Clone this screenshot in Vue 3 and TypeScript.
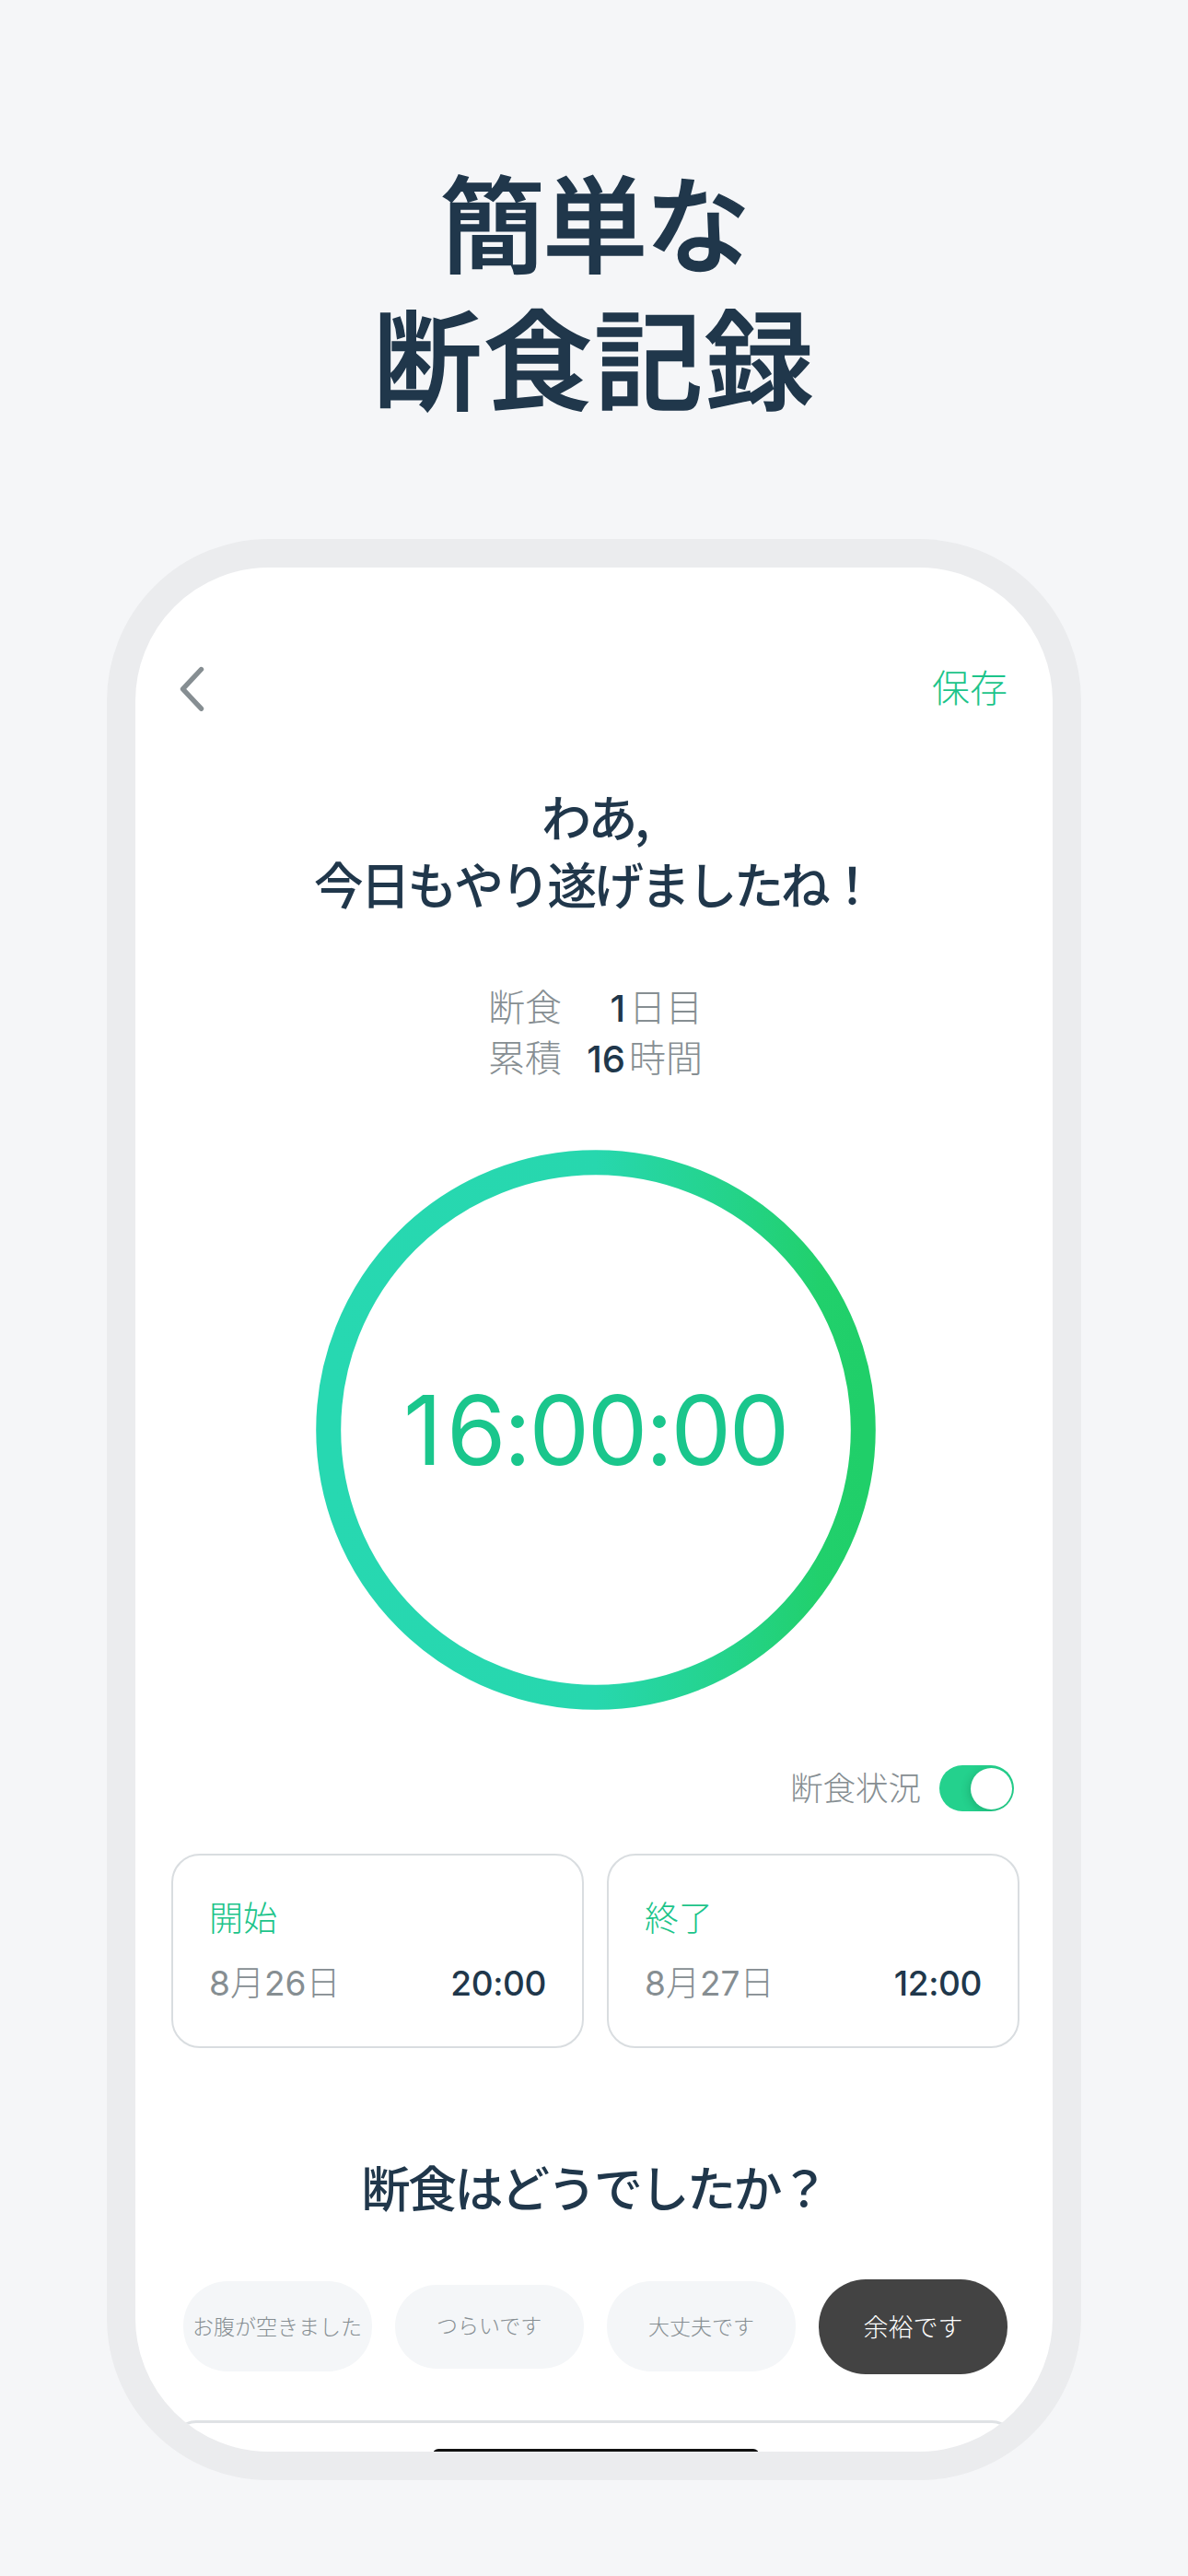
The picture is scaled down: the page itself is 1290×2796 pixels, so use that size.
<script setup lang="ts">
interface Period {
  label: string
  date: string[]
  time: string
}

interface Mood {
  label: string
  size: 'sm' | 'md' | 'lg'
  selected?: boolean
}

const stats = [
  { label: '断食', value: '1', unit: '日目' },
  { label: '累積', value: '16', unit: '時間' },
]

const periods: Period[] = [
  { label: '開始', date: ['8', '月', '26', '日'], time: '20:00' },
  { label: '終了', date: ['8', '月', '27', '日'], time: '12:00' },
]

const moods: Mood[] = [
  { label: 'お腹が空きました', size: 'md' },
  { label: 'つらいです', size: 'sm' },
  { label: '大丈夫です', size: 'md' },
  { label: '余裕です', size: 'lg', selected: true },
]
</script>

<template>
  <main class="poster">
    <h1 class="title">
      <span class="title-first">簡単な</span>
      <span class="title-second">断食記録</span>
    </h1>

    <section class="phone">
      <header class="nav">
        <svg class="back" width="28" height="50" viewBox="0 0 28 50" fill="none">
          <path d="M24.5 3.5 4.5 24.8 24.5 46.2" stroke="#868e92" stroke-width="5.4" stroke-linecap="round" stroke-linejoin="round" />
        </svg>
        <span class="save">保存</span>
      </header>

      <h2 class="headline">
        <span>わあ,</span>
        <span>今日もやり遂げましたね！</span>
      </h2>

      <div class="stats">
        <div v-for="s in stats" :key="s.label" class="stat">
          <span class="stat-label">{{ s.label }}</span>
          <span class="stat-value">{{ s.value }}</span>
          <span class="stat-unit">{{ s.unit }}</span>
        </div>
      </div>

      <div class="ring">
        <svg class="ring-art" width="608" height="608" viewBox="0 0 608 608" fill="none">
          <defs>
            <linearGradient id="ringFill" x1="0" y1="0" x2="1" y2="0">
              <stop offset="0" stop-color="#27d8b1" />
              <stop offset="0.5" stop-color="#27d7ae" />
              <stop offset="0.75" stop-color="#24d38a" />
              <stop offset="0.92" stop-color="#21d06c" />
              <stop offset="1" stop-color="#20cf69" />
            </linearGradient>
          </defs>
          <circle cx="304" cy="304" r="290.3" stroke="url(#ringFill)" stroke-width="27" />
        </svg>
        <span class="timer"><span class="timer-lead">1</span>6:00:00</span>
      </div>

      <div class="status">
        <span class="status-label">断食状況</span>
        <span class="toggle"><i class="knob"></i></span>
      </div>

      <div class="cards">
        <article v-for="p in periods" :key="p.label" class="card">
          <div class="card-label">{{ p.label }}</div>
          <div class="card-row">
            <span class="date"><span v-for="(part, i) in p.date" :key="i" :class="i % 2 ? 'date-unit' : 'date-number'">{{ part }}</span></span>
            <span class="time">{{ p.time }}</span>
          </div>
        </article>
      </div>

      <h3 class="question">断食はどうでしたか？</h3>

      <div class="moods">
        <div v-for="m in moods" :key="m.label" class="mood" :class="[m.size, { selected: m.selected }]">
          {{ m.label }}
        </div>
      </div>

      <div class="sheet"></div>
      <div class="home-bar"></div>
    </section>
  </main>
</template>

<style>
body {
  margin: 0;
  background: #f5f6f8;
}
</style>

<style scoped>
.poster {
  width: 1290px;
  height: 2796px;
  overflow: hidden;
  background: #f5f6f8;
  display: flex;
  flex-direction: column;
  align-items: center;
  font-family: "Noto Sans CJK JP", sans-serif;
  color: #20374b;
}
.title {
  margin: 0;
  padding-top: 164px;
  height: 585px;
  flex: none;
  box-sizing: border-box;
  font-weight: 500;
  -webkit-text-stroke: 1.5px #20374b;
}
.title span {
  display: block;
  height: 147px;
  line-height: 147px;
  text-align: center;
  white-space: nowrap;
}
.title-first {
  font-size: 114px;
  letter-spacing: -2.5px;
}
.title-second {
  font-size: 118px;
  letter-spacing: 2px;
}
.phone {
  width: 1058px;
  height: 2107px;
  flex: none;
  box-sizing: border-box;
  border: 31px solid #ebecee;
  border-radius: 176px;
  background: #fff;
  overflow: hidden;
  display: flex;
  flex-direction: column;
}
.phone > * {
  flex: none;
}
.nav {
  display: flex;
  justify-content: space-between;
  align-items: center;
  height: 60px;
  margin: 102px 49px 0 47px;
}
.save {
  font-size: 41px;
  line-height: 60px;
  margin-bottom: 8px;
  font-weight: 300;
  color: #1cc48a;
}
.headline {
  margin: 71px 0 0;
  font-size: 54px;
  font-weight: 500;
}
.headline span {
  display: block;
  height: 73px;
  line-height: 73px;
  text-align: center;
  letter-spacing: -3.3px;
  white-space: nowrap;
}
.stats {
  margin: 69px 0 0 383px;
}
.stat {
  display: flex;
  height: 55px;
  line-height: 55px;
  font-size: 40px;
}
.stat-label {
  width: 82px;
  font-weight: 300;
  color: #868e92;
}
.stat-value {
  width: 67px;
  margin-right: 4px;
  padding-top: 3px;
  text-align: right;
  font-family: Inter, sans-serif;
  font-weight: 500;
}
.stat-unit {
  font-weight: 300;
  color: #868e92;
}
.ring {
  width: 608px;
  height: 608px;
  margin: 74px 0 0 195.5px;
  display: grid;
  place-items: center;
}
.ring-art,
.timer {
  grid-area: 1 / 1;
}
.timer {
  font-family: Inter, sans-serif;
  font-size: 104px;
  line-height: 120px;
  letter-spacing: -2.4px;
  color: #1ac68c;
}
.timer-lead {
  letter-spacing: 4.5px;
}
.status {
  display: flex;
  justify-content: flex-end;
  align-items: center;
  height: 50px;
  margin: 60px 42px 0 0;
}
.status-label {
  font-size: 35.5px;
  line-height: 50px;
  font-weight: 300;
  color: #868e92;
  margin: 0 20px 4px 0;
}
.toggle {
  width: 81px;
  height: 50px;
  box-sizing: border-box;
  padding: 2.5px;
  border-radius: 25px;
  background: #24d18d;
  overflow: hidden;
  display: flex;
  justify-content: flex-end;
}
.knob {
  width: 45px;
  height: 45px;
  border-radius: 50%;
  background: #fff;
  box-shadow: -2px 2px 10px rgba(0, 60, 30, 0.2);
}
.cards {
  display: flex;
  gap: 25px;
  margin: 46px 0 0 39px;
}
.card {
  width: 448px;
  height: 211px;
  box-sizing: border-box;
  border: 2.5px solid #d9dde0;
  border-radius: 31px;
  padding: 41px 39px 0 39px;
}
.card-label {
  height: 50px;
  line-height: 50px;
  font-size: 37px;
  font-weight: 300;
  color: #1cc48a;
}
.card-row {
  display: flex;
  justify-content: space-between;
  height: 50px;
  line-height: 50px;
  margin-top: 23px;
  font-family: Inter, "Noto Sans CJK JP", sans-serif;
  font-size: 37px;
}
.date {
  color: #868e92;
  white-space: nowrap;
}
.date-unit {
  font-weight: 300;
}
.date-number {
  font-weight: 400;
}
.time {
  font-weight: 500;
  letter-spacing: -0.4px;
}
.question {
  margin: 114px 0 0;
  height: 73px;
  line-height: 73px;
  font-size: 53px;
  font-weight: 500;
  letter-spacing: -2.5px;
  text-align: center;
}
.moods {
  display: flex;
  align-items: center;
  gap: 25.2px;
  height: 104px;
  margin: 63px 0 0 51.5px;
}
.mood {
  width: 205px;
  flex: none;
  box-sizing: border-box;
  padding-bottom: 2px;
  display: flex;
  align-items: center;
  justify-content: center;
  background: #f4f6f8;
  color: #868e92;
  font-size: 23px;
  font-weight: 300;
  white-space: nowrap;
}
.mood.sm {
  height: 91px;
  padding-bottom: 4px;
  border-radius: 45px;
}
.mood.md {
  height: 98px;
  border-radius: 48px;
}
.mood.lg {
  height: 103px;
  border-radius: 51px;
  font-size: 27px;
}
.mood.selected {
  background: #434343;
  color: #fff;
}
.sheet {
  height: 28px;
  margin: 50px 38px 0;
  border: 3px solid #dfe2e5;
  border-bottom: 0;
  border-radius: 31px 31px 0 0;
  box-sizing: border-box;
}
.home-bar {
  width: 354px;
  height: 12px;
  margin: 3px 0 0 323px;
  border-radius: 6px;
  background: #111;
}
</style>
